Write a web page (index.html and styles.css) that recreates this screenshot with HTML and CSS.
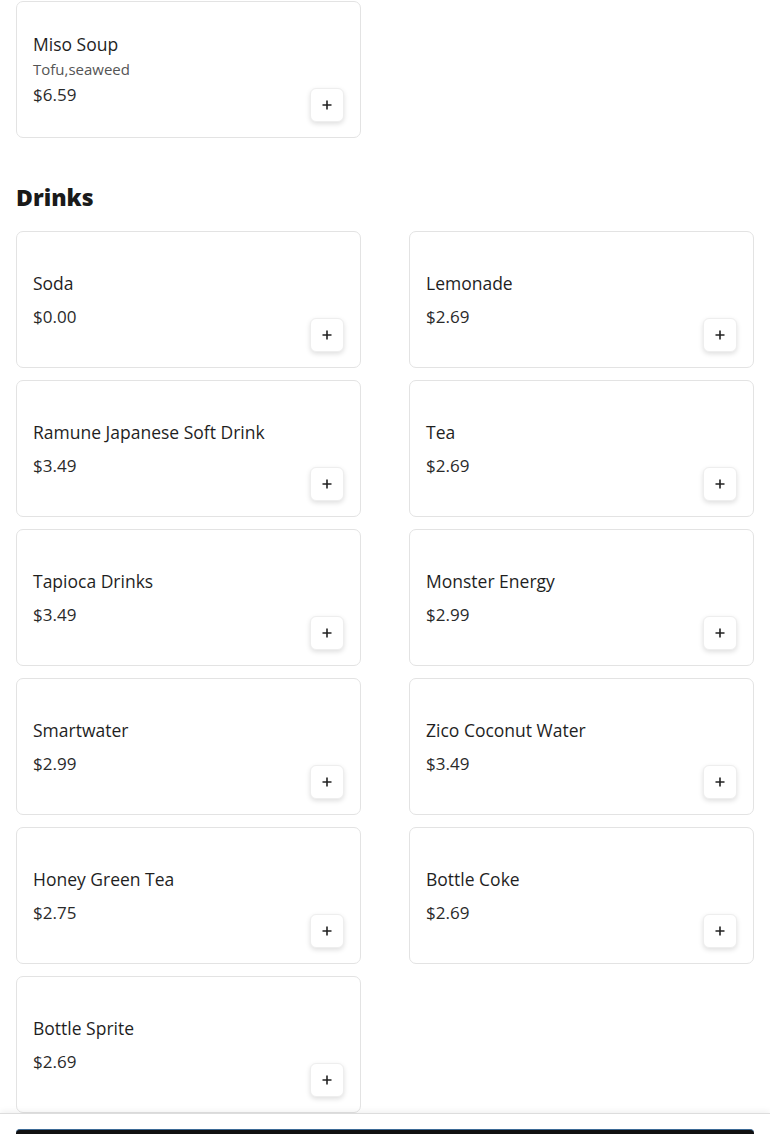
FILE: index.html
```html
<!DOCTYPE html>
<html lang="en">
<head>
    <meta charset="UTF-8">
    <meta name="viewport" content="width=device-width, initial-scale=1.0">
    <title>Menu</title>
    <link rel="stylesheet" href="styles.css">
</head>
<body>

    <div class="menu">
        <section class="category">
            <div class="items">
                <div class="item">
                    <div class="info">
                        <div class="name">Miso Soup</div>
                        <div class="desc">Tofu,seaweed</div>
                        <div class="price">$6.59</div>
                    </div>
                    <button class="add" type="button"><svg viewBox="0 0 12 12"><path d="M6 1.5v9M1.5 6h9"/></svg></button>
                </div>
            </div>
        </section>

        <section class="category">
            <h2>Drinks</h2>
            <div class="items">
                <div class="item">
                    <div class="info"><div class="name">Soda</div><div class="price">$0.00</div></div>
                    <button class="add" type="button"><svg viewBox="0 0 12 12"><path d="M6 1.5v9M1.5 6h9"/></svg></button>
                </div>
                <div class="item">
                    <div class="info"><div class="name">Lemonade</div><div class="price">$2.69</div></div>
                    <button class="add" type="button"><svg viewBox="0 0 12 12"><path d="M6 1.5v9M1.5 6h9"/></svg></button>
                </div>
                <div class="item">
                    <div class="info"><div class="name">Ramune Japanese Soft Drink</div><div class="price">$3.49</div></div>
                    <button class="add" type="button"><svg viewBox="0 0 12 12"><path d="M6 1.5v9M1.5 6h9"/></svg></button>
                </div>
                <div class="item">
                    <div class="info"><div class="name">Tea</div><div class="price">$2.69</div></div>
                    <button class="add" type="button"><svg viewBox="0 0 12 12"><path d="M6 1.5v9M1.5 6h9"/></svg></button>
                </div>
                <div class="item">
                    <div class="info"><div class="name">Tapioca Drinks</div><div class="price">$3.49</div></div>
                    <button class="add" type="button"><svg viewBox="0 0 12 12"><path d="M6 1.5v9M1.5 6h9"/></svg></button>
                </div>
                <div class="item">
                    <div class="info"><div class="name">Monster Energy</div><div class="price">$2.99</div></div>
                    <button class="add" type="button"><svg viewBox="0 0 12 12"><path d="M6 1.5v9M1.5 6h9"/></svg></button>
                </div>
                <div class="item">
                    <div class="info"><div class="name">Smartwater</div><div class="price">$2.99</div></div>
                    <button class="add" type="button"><svg viewBox="0 0 12 12"><path d="M6 1.5v9M1.5 6h9"/></svg></button>
                </div>
                <div class="item">
                    <div class="info"><div class="name">Zico Coconut Water</div><div class="price">$3.49</div></div>
                    <button class="add" type="button"><svg viewBox="0 0 12 12"><path d="M6 1.5v9M1.5 6h9"/></svg></button>
                </div>
                <div class="item">
                    <div class="info"><div class="name">Honey Green Tea</div><div class="price">$2.75</div></div>
                    <button class="add" type="button"><svg viewBox="0 0 12 12"><path d="M6 1.5v9M1.5 6h9"/></svg></button>
                </div>
                <div class="item">
                    <div class="info"><div class="name">Bottle Coke</div><div class="price">$2.69</div></div>
                    <button class="add" type="button"><svg viewBox="0 0 12 12"><path d="M6 1.5v9M1.5 6h9"/></svg></button>
                </div>
                <div class="item">
                    <div class="info"><div class="name">Bottle Sprite</div><div class="price">$2.69</div></div>
                    <button class="add" type="button"><svg viewBox="0 0 12 12"><path d="M6 1.5v9M1.5 6h9"/></svg></button>
                </div>
            </div>
        </section>
    </div>

    <footer class="cart-bar">
        <div class="cart-btn"></div>
    </footer>

</body>
</html>
```

FILE: styles.css
```css
:root {
    --text: #1f1f1f;
    --muted: #555;
    --border: #e3e3e3;
}

* {
    margin: 0;
    padding: 0;
    box-sizing: border-box;
    font-family: 'Open Sans', 'Liberation Sans', sans-serif;
}

body {
    background-color: white;
    color: var(--text);
    overflow: hidden;
}

.menu {
    padding: 1px 16px 0;
}

.category h2 {
    font-size: 23px;
    font-weight: 800;
    line-height: 30px;
    margin: 44px 0 19px;
    color: #1a1a1a;
}

.items {
    display: grid;
    grid-template-columns: 345px 345px;
    column-gap: 48px;
    row-gap: 12px;
}

.item {
    display: flex;
    height: 137px;
    padding: 16px 16px 15px;
    border: 1px solid var(--border);
    border-radius: 7px;
}

.info {
    flex: 1;
    align-self: center;
    margin-top: -2px;
}

.name {
    font-size: 17.5px;
    font-weight: 500;
    line-height: 24px;
}

.desc {
    font-size: 15px;
    font-weight: 400;
    color: var(--muted);
    line-height: 20px;
    margin-top: 3px;
}

.price {
    font-size: 17px;
    font-weight: 400;
    color: #2a2a2a;
    line-height: 22px;
    margin-top: 11px;
}

.desc + .price {
    margin-top: 5px;
}

.add {
    align-self: flex-end;
    width: 34px;
    height: 34px;
    background-color: white;
    border: 1px solid #eee;
    border-radius: 6px;
    box-shadow: 0 2px 5px rgba(0, 0, 0, 0.13);
    display: flex;
    align-items: center;
    justify-content: center;
    cursor: pointer;
}

.add svg {
    width: 12px;
    height: 12px;
    stroke: #222;
    stroke-width: 1.6;
    fill: none;
}

.cart-bar {
    position: fixed;
    left: 0;
    right: 0;
    bottom: 0;
    height: 21px;
    overflow: hidden;
    background-color: white;
    border-top: 1px solid #ddd;
    box-shadow: 0 -2px 6px rgba(0, 0, 0, 0.06);
    padding: 15px 16px 0;
}

.cart-btn {
    height: 48px;
    background-color: #111;
    border-top: 1px solid #3d6a96;
    border-radius: 4px;
}
```
